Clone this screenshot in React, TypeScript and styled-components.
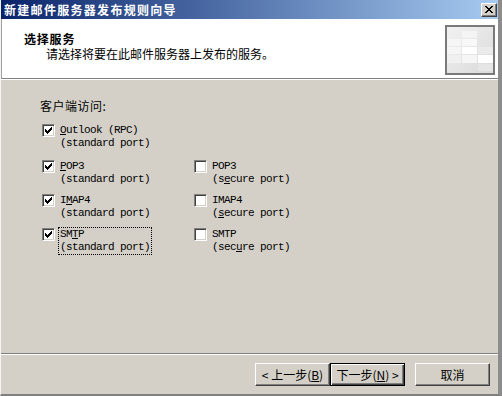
import styled, { createGlobalStyle } from "styled-components";

const GlobalStyle = createGlobalStyle`
  html, body {
    margin: 0;
    padding: 0;
    background: #d4d0c8;
  }
  * {
    box-sizing: border-box;
  }
`;

const Frame = styled.div`
  width: 502px;
  height: 396px;
  overflow: hidden;
  display: flex;
  flex-direction: column;
  background: #d4d0c8;
  border-left: 1px solid #f4f4f4;
  border-right: 4px solid #8c8c8c;
  border-bottom: 2px solid #808080;
  font-family: "Noto Sans CJK SC", "Liberation Sans", sans-serif;
  font-size: 12px;
  color: #000;
`;

const TitleBar = styled.div`
  height: 19px;
  flex: none;
  display: flex;
  align-items: center;
  justify-content: space-between;
  padding: 0 1px 0 3px;
  background: linear-gradient(90deg, #0a246a 0%, #4f6fa8 45%, #a6caf0 100%);
`;

const TitleText = styled.span`
  color: #fff;
  font-weight: bold;
  font-size: 12px;
  letter-spacing: 1.3px;
  line-height: 14px;
`;

const CloseButton = styled.div`
  width: 16px;
  height: 14px;
  display: flex;
  align-items: center;
  justify-content: center;
  background: #d4d0c8;
  border-top: 1px solid #fff;
  border-left: 1px solid #fff;
  border-right: 1px solid #404040;
  border-bottom: 1px solid #404040;
  box-shadow: inset -1px -1px 0 #808080;
`;

const Header = styled.div`
  height: 60px;
  flex: none;
  display: flex;
  justify-content: space-between;
  background: #fff;
  border-left: 1px solid #a0a0a0;
  border-bottom: 1px solid #808080;
  padding: 12px 3px 0 22px;
`;

const HeaderText = styled.div`
  display: flex;
  flex-direction: column;
`;

const HeaderTitle = styled.div`
  font-weight: bold;
  font-size: 12px;
  letter-spacing: 0.8px;
  line-height: 15px;
`;

const HeaderSub = styled.div`
  padding-left: 22px;
  line-height: 15px;
`;

const HeaderIcon = styled.svg`
  margin-top: -6px;
  flex: none;
`;

const Body = styled.div`
  flex: 1;
  border-top: 1px solid #fff;
  padding: 19px 0 0 39px;
`;

const GroupLabel = styled.div`
  line-height: 14px;
  letter-spacing: 0.5px;
`;

const OptionGrid = styled.div`
  margin-top: 10px;
  display: grid;
  grid-template-columns: 152px 150px;
  row-gap: 6px;
`;

const OptionRow = styled.div<{ $first?: boolean }>`
  display: flex;
  align-items: flex-start;
  gap: 3px;
  grid-column: ${(p) => (p.$first ? "1 / span 2" : "auto")};
  margin-bottom: ${(p) => (p.$first ? "2px" : "0")};
`;

const Box = styled.span`
  width: 13px;
  height: 13px;
  flex: none;
  margin: 1px 0 0 2px;
  display: flex;
  background: #fff;
  border-top: 1px solid #808080;
  border-left: 1px solid #808080;
  border-right: 1px solid #fff;
  border-bottom: 1px solid #fff;
  box-shadow: inset 1px 1px 0 #404040, inset -1px -1px 0 #d4d0c8;
  padding: 1px;
`;

const Label = styled.div<{ $focus?: boolean }>`
  font-family: "Liberation Mono", "Noto Sans CJK SC", monospace;
  font-size: 11px;
  letter-spacing: -0.6px;
  line-height: 13px;
  padding: 0 1px;
  border: 1px ${(p) => (p.$focus ? "dotted #000" : "solid transparent")};
`;

const Line = styled.div`
  white-space: pre;
`;

const U = styled.span`
  text-decoration: underline;
  text-underline-offset: 1px;
`;

const Footer = styled.div`
  height: 41px;
  flex: none;
  border-top: 1px solid #808080;
  box-shadow: inset 0 1px 0 #fff;
  display: flex;
  align-items: flex-start;
  justify-content: flex-end;
  padding: 9px 8px 0 0;
`;

const ButtonGroup = styled.div`
  display: flex;
  margin-right: 10px;
`;

const Button = styled.div<{ $default?: boolean }>`
  width: 75px;
  height: 23px;
  display: flex;
  align-items: center;
  justify-content: center;
  background: #d4d0c8;
  line-height: 14px;
  white-space: pre;
  border: 1px solid ${(p) => (p.$default ? "#000" : "transparent")};
  box-shadow: inset 1px 1px 0 #fff, inset -1px -1px 0 #404040,
    inset -2px -2px 0 #808080;
  ${(p) =>
    !p.$default &&
    `border-top: 1px solid #fff; border-left: 1px solid #fff; border-right: 1px solid #404040; border-bottom: 1px solid #404040; box-shadow: inset -1px -1px 0 #808080;`}
`;

const Check = () => (
  <svg width="9" height="9" viewBox="0 0 9 9" shapeRendering="crispEdges">
    <path
      d="M1 3h1v3h-1z M2 4h1v3h-1z M3 5h1v3h-1z M4 4h1v3h-1z M5 3h1v3h-1z M6 2h1v3h-1z M7 1h1v3h-1z"
      fill="#000"
    />
  </svg>
);

const CloseGlyph = () => (
  <svg width="8" height="7" viewBox="0 0 8 7" shapeRendering="crispEdges">
    <path
      d="M0 0h2v1h-2z M1 1h2v1h-2z M2 2h4v1h-4z M3 3h2v1h-2z M2 4h4v1h-4z M1 5h2v1h-2z M0 6h2v1h-2z M6 0h2v1h-2z M5 1h2v1h-2z M5 5h2v1h-2z M6 6h2v1h-2z"
      fill="#000"
    />
  </svg>
);

const WizardIcon = () => (
  <HeaderIcon width="50" height="50" viewBox="0 0 50 50" shapeRendering="crispEdges">
    <defs>
      <linearGradient id="ig" x1="0" y1="0" x2="1" y2="1">
        <stop offset="0" stopColor="#f2f2f2" />
        <stop offset="1" stopColor="#d9d9d9" />
      </linearGradient>
    </defs>
    <rect x="1" y="1" width="48" height="48" fill="url(#ig)" stroke="#7a7a7a" strokeWidth="2" />
    <rect x="17" y="6" width="15" height="7" fill="#f4f4f4" />
    <rect x="2" y="14" width="14" height="7" fill="#f6f6f6" />
    <rect x="17" y="14" width="15" height="7" fill="#f8f8f8" />
    <rect x="2" y="22" width="14" height="7" fill="#f6f6f6" />
    <rect x="17" y="22" width="15" height="7" fill="#ffffff" />
    <rect x="33" y="22" width="15" height="7" fill="#ebebeb" />
    <rect x="2" y="30" width="14" height="8" fill="#f0f0f0" />
    <rect x="17" y="30" width="15" height="8" fill="#f6f6f6" />
    <rect x="33" y="30" width="15" height="8" fill="#ffffff" />
    <rect x="33" y="39" width="15" height="7" fill="#e6e6e6" />
  </HeaderIcon>
);

type Option = {
  checked: boolean;
  name: React.ReactNode;
  port: React.ReactNode;
  focus?: boolean;
};

const options: Option[] = [
  { checked: true, name: <><U>P</U>OP3</>, port: "(standard port)" },
  { checked: false, name: "POP3", port: <>(s<U>e</U>cure port)</> },
  { checked: true, name: <>I<U>M</U>AP4</>, port: "(standard port)" },
  { checked: false, name: "IMAP4", port: <>(<U>s</U>ecure port)</> },
  { checked: true, name: <>SM<U>T</U>P</>, port: "(standard port)", focus: true },
  { checked: false, name: "SMTP", port: <>(sec<U>u</U>re port)</> },
];

export default function App() {
  return (
    <>
      <GlobalStyle />
      <Frame>
        <TitleBar>
          <TitleText>新建邮件服务器发布规则向导</TitleText>
          <CloseButton>
            <CloseGlyph />
          </CloseButton>
        </TitleBar>
        <Header>
          <HeaderText>
            <HeaderTitle>选择服务</HeaderTitle>
            <HeaderSub>请选择将要在此邮件服务器上发布的服务。</HeaderSub>
          </HeaderText>
          <WizardIcon />
        </Header>
        <Body>
          <GroupLabel>客户端访问:</GroupLabel>
          <OptionGrid>
            <OptionRow $first>
              <Box>
                <Check />
              </Box>
              <Label>
                <Line>
                  <U>O</U>utlook (RPC)
                </Line>
                <Line>(standard port)</Line>
              </Label>
            </OptionRow>
            {options.map((o, i) => (
              <OptionRow key={i}>
                <Box>{o.checked && <Check />}</Box>
                <Label $focus={o.focus}>
                  <Line>{o.name}</Line>
                  <Line>{o.port}</Line>
                </Label>
              </OptionRow>
            ))}
          </OptionGrid>
        </Body>
        <Footer>
          <ButtonGroup>
            <Button>
              {"< 上一步("}
              <U>B</U>
              {")"}
            </Button>
            <Button $default>
              {"下一步("}
              <U>N</U>
              {") >"}
            </Button>
          </ButtonGroup>
          <Button>取消</Button>
        </Footer>
      </Frame>
    </>
  );
}
